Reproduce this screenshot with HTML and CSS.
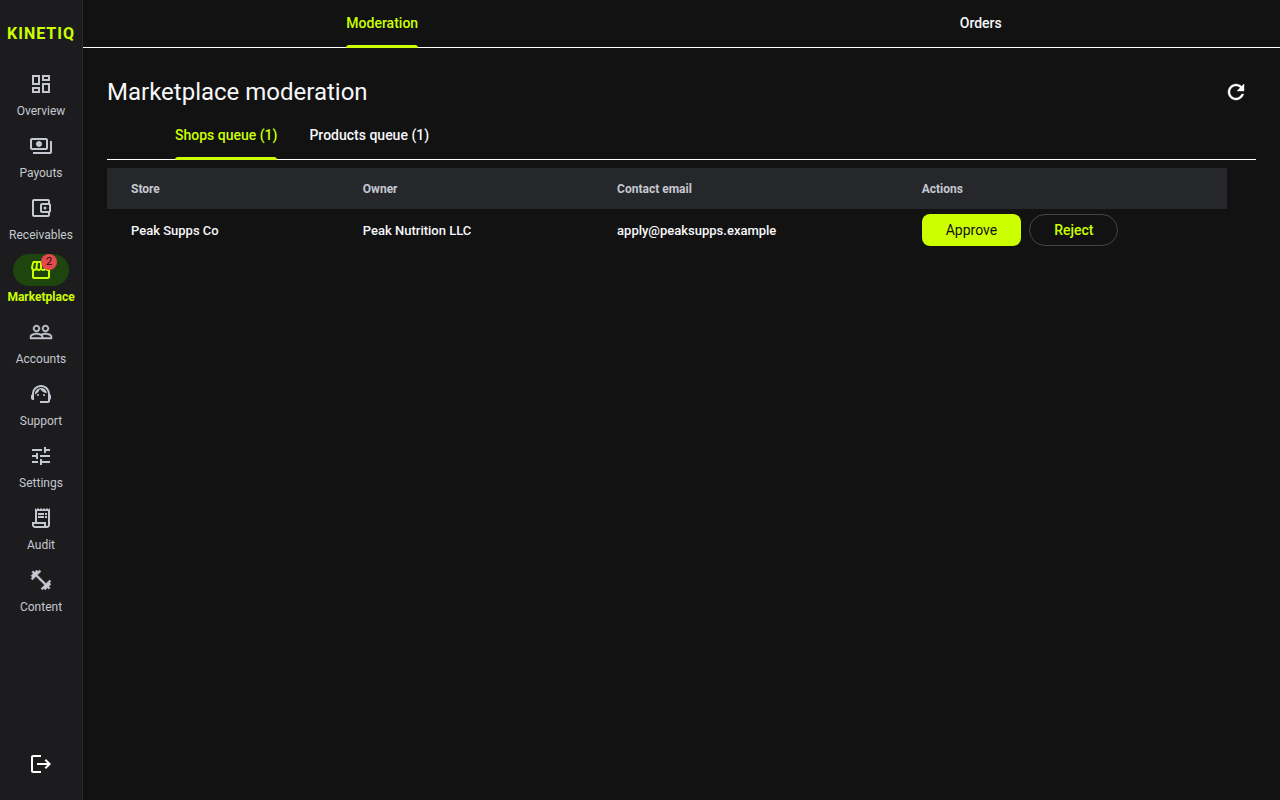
FILE: index.html
```
<!DOCTYPE html>
<html lang="en">
<head>
    <meta charset="UTF-8">
    <meta name="viewport" content="width=device-width, initial-scale=1.0">
    <title>Marketplace moderation - Kinetiq</title>
    <link rel="stylesheet" href="styles.css">
</head>
<body>
    <aside class="sidebar">
        <div class="logo">KINETIQ</div>
        <nav class="side-nav">
            <a href="#overview" class="nav-item">
                <span class="nav-icon"><svg viewBox="0 0 24 24"><path d="M19 5v2h-4V5h4M9 5v6H5V5h4m10 8v6h-4v-6h4M9 17v2H5v-2h4M21 3h-8v6h8V3zM11 3H3v10h8V3zm10 8h-8v10h8V11zm-10 4H3v6h8v-6z"/></svg></span>
                <span class="nav-label">Overview</span>
            </a>
            <a href="#payouts" class="nav-item">
                <span class="nav-icon"><svg viewBox="0 0 24 24"><path d="M19 14V6c0-1.1-.9-2-2-2H3c-1.1 0-2 .9-2 2v8c0 1.1.9 2 2 2h14c1.1 0 2-.9 2-2zm-2 0H3V6h14v8zm-7-7c-1.66 0-3 1.34-3 3s1.34 3 3 3 3-1.34 3-3-1.34-3-3-3zm13 0v11c0 1.1-.9 2-2 2H4v-2h17V7h2z"/></svg></span>
                <span class="nav-label">Payouts</span>
            </a>
            <a href="#receivables" class="nav-item">
                <span class="nav-icon"><svg viewBox="0 0 24 24"><path d="M21 7.28V5c0-1.1-.9-2-2-2H5c-1.11 0-2 .9-2 2v14c0 1.1.89 2 2 2h14c1.1 0 2-.9 2-2v-2.28c.59-.35 1-.98 1-1.72V9c0-.74-.41-1.37-1-1.72zM20 9v6h-7V9h7zM5 19V5h14v2h-6c-1.1 0-2 .9-2 2v6c0 1.1.9 2 2 2h6v2H5z"/><circle cx="16" cy="12" r="1.5"/></svg></span>
                <span class="nav-label">Receivables</span>
            </a>
            <a href="#marketplace" class="nav-item active">
                <span class="nav-icon"><svg viewBox="0 0 24 24"><path d="M21.9 8.89l-1.05-4.37c-.22-.9-1-1.52-1.91-1.52H5.05c-.9 0-1.69.63-1.9 1.52L2.1 8.89c-.24 1.02-.02 2.06.62 2.88.08.11.19.19.28.29V19c0 1.1.9 2 2 2h14c1.1 0 2-.9 2-2v-6.94c.09-.09.2-.18.28-.28.64-.82.87-1.87.62-2.89zm-2.99-3.9l1.05 4.37c.1.42.01.84-.25 1.17-.14.18-.44.47-.94.47-.61 0-1.14-.49-1.21-1.14L16.98 5l1.93-.01zM13 5h1.96l.54 4.52c.05.39-.07.78-.33 1.07-.22.26-.54.41-.95.41-.67 0-1.22-.59-1.22-1.31V5zM8.49 9.52L9.04 5H11v4.69c0 .72-.55 1.31-1.29 1.31-.34 0-.65-.15-.89-.41-.25-.29-.37-.68-.33-1.07zm-4.45-.16L5.05 5h1.97l-.58 4.86c-.08.65-.6 1.14-1.21 1.14-.49 0-.8-.29-.93-.47-.27-.32-.36-.75-.26-1.17zM5 19v-6.03c.08.01.15.03.23.03.87 0 1.66-.36 2.24-.95.6.6 1.4.95 2.31.95.87 0 1.65-.36 2.23-.93.59.57 1.39.93 2.29.93.84 0 1.64-.35 2.24-.95.58.59 1.37.95 2.24.95.08 0 .15-.02.23-.03V19H5z"/></svg><span class="badge">2</span></span>
                <span class="nav-label">Marketplace</span>
            </a>
            <a href="#accounts" class="nav-item">
                <span class="nav-icon"><svg class="heavy" viewBox="0 0 24 24"><path d="M16.5 13c-1.2 0-3.07.34-4.5 1-1.43-.67-3.3-1-4.5-1C5.33 13 1 14.08 1 16.25V19h22v-2.75c0-2.17-4.33-3.25-6.5-3.25zm-4 4.5h-10v-1.25c0-.54 2.56-1.75 5-1.75s5 1.21 5 1.75v1.25zm9 0H14v-1.25c0-.46-.2-.86-.52-1.22.88-.3 1.96-.53 3.02-.53 2.44 0 5 1.21 5 1.75v1.25zM7.5 12c1.93 0 3.5-1.57 3.5-3.5S9.43 5 7.5 5 4 6.57 4 8.5 5.57 12 7.5 12zm0-5.5c1.1 0 2 .9 2 2s-.9 2-2 2-2-.9-2-2 .9-2 2-2zm9 5.5c1.93 0 3.5-1.57 3.5-3.5S18.43 5 16.5 5 13 6.57 13 8.5s1.57 3.5 3.5 3.5zm0-5.5c1.1 0 2 .9 2 2s-.9 2-2 2-2-.9-2-2 .9-2 2-2z"/></svg></span>
                <span class="nav-label">Accounts</span>
            </a>
            <a href="#support" class="nav-item">
                <span class="nav-icon"><svg viewBox="0 0 24 24"><path d="M21 12.22C21 6.73 16.74 3 12 3c-4.69 0-9 3.65-9 9.28-.6.34-1 .98-1 1.72v2c0 1.1.9 2 2 2h1v-6.1c0-3.87 3.13-7 7-7s7 3.13 7 7V19h-8v2h8c1.1 0 2-.9 2-2v-1.22c.59-.31 1-.92 1-1.64v-2.3c0-.7-.41-1.31-1-1.62z"/><circle cx="9" cy="13" r="1"/><circle cx="15" cy="13" r="1"/><path d="M18 11.03C17.52 8.18 15.04 6 12.05 6c-3.03 0-6.29 2.51-6.03 6.45 2.47-1.01 4.33-3.21 4.86-5.89 1.31 2.63 4 4.44 7.12 4.47z"/></svg></span>
                <span class="nav-label">Support</span>
            </a>
            <a href="#settings" class="nav-item">
                <span class="nav-icon"><svg viewBox="0 0 24 24"><path d="M3 17v2h6v-2H3zM3 5v2h10V5H3zm10 16v-2h8v-2h-8v-2h-2v6h2zM7 9v2H3v2h4v2h2V9H7zm14 4v-2H11v2h10zm-6-4h2V7h4V5h-4V3h-2v6z"/></svg></span>
                <span class="nav-label">Settings</span>
            </a>
            <a href="#audit" class="nav-item">
                <span class="nav-icon"><svg viewBox="0 0 24 24"><path d="M19.5 3.5L18 2l-1.5 1.5L15 2l-1.5 1.5L12 2l-1.5 1.5L9 2 7.5 3.5 6 2v14H3v3c0 1.66 1.34 3 3 3h12c1.66 0 3-1.34 3-3V2l-1.5 1.5zM15 20H6c-.55 0-1-.45-1-1v-1h10v2zm4-1c0 .55-.45 1-1 1s-1-.45-1-1v-3H8V5h11v14z"/><path d="M9 7h6v2H9zM16 7h2v2h-2zM9 10h6v2H9zM16 10h2v2h-2z"/></svg></span>
                <span class="nav-label">Audit</span>
            </a>
            <a href="#content" class="nav-item">
                <span class="nav-icon"><svg class="heavy" viewBox="0 0 24 24"><path d="M20.57 14.86L22 13.43 20.57 12 17 15.57 8.43 7 12 3.43 10.57 2 9.14 3.43 7.71 2 5.57 4.14 4.14 2.71 2.71 4.14l1.43 1.43L2 7.71l1.43 1.43L2 10.57 3.43 12 7 8.43 15.57 17 12 20.57 13.43 22l1.43-1.43L16.29 22l2.14-2.14 1.43 1.43 1.43-1.43-1.43-1.43L22 16.29z"/></svg></span>
                <span class="nav-label">Content</span>
            </a>
        </nav>
        <button class="icon-btn" aria-label="Log out">
            <svg viewBox="0 0 24 24"><path d="M17 7l-1.41 1.41L18.17 11H8v2h10.17l-2.58 2.58L17 17l5-5zM4 5h8V3H4c-1.1 0-2 .9-2 2v14c0 1.1.9 2 2 2h8v-2H4V5z"/></svg>
        </button>
    </aside>

    <main class="main">
        <div class="tabs top-tabs">
            <button class="tab active"><span>Moderation</span></button>
            <button class="tab"><span>Orders</span></button>
        </div>

        <section class="content">
            <div class="page-header">
                <h1>Marketplace moderation</h1>
                <button class="icon-btn" aria-label="Refresh">
                    <svg class="heavy" viewBox="0 0 24 24"><path d="M17.65 6.35C16.2 4.9 14.21 4 12 4c-4.42 0-7.99 3.58-7.99 8s3.57 8 7.99 8c3.73 0 6.84-2.55 7.73-6h-2.08c-.82 2.33-3.04 4-5.65 4-3.31 0-6-2.69-6-6s2.69-6 6-6c1.66 0 3.14.69 4.22 1.78L13 11h7V4l-2.35 2.35z"/></svg>
                </button>
            </div>

            <div class="tabs queue-tabs">
                <button class="tab active"><span>Shops queue (1)</span></button>
                <button class="tab"><span>Products queue (1)</span></button>
            </div>

            <div class="table-wrap">
                <table>
                    <colgroup>
                        <col class="col-store">
                        <col class="col-owner">
                        <col class="col-email">
                        <col>
                    </colgroup>
                    <thead>
                        <tr>
                            <th>Store</th>
                            <th>Owner</th>
                            <th>Contact email</th>
                            <th>Actions</th>
                        </tr>
                    </thead>
                    <tbody>
                        <tr>
                            <td>Peak Supps Co</td>
                            <td>Peak Nutrition LLC</td>
                            <td>apply@peaksupps.example</td>
                            <td>
                                <div class="actions">
                                    <button class="btn btn-approve">Approve</button>
                                    <button class="btn btn-reject">Reject</button>
                                </div>
                            </td>
                        </tr>
                    </tbody>
                </table>
            </div>
        </section>
    </main>
</body>
</html>
```
FILE: styles.css
```
* {
    margin: 0;
    padding: 0;
    box-sizing: border-box;
}
body {
    display: flex;
    min-height: 100vh;
    background: #121212;
    color: #f7f7fa;
    font-family: Roboto, Arial, sans-serif;
    font-size: 14px;
}
button {
    font: inherit;
    color: inherit;
    background: none;
    border: none;
    cursor: pointer;
}
svg {
    display: block;
    width: 24px;
    height: 24px;
    fill: currentColor;
}
svg.heavy {
    stroke: currentColor;
    stroke-width: 0.4;
}

/* sidebar */
.sidebar {
    display: flex;
    flex-direction: column;
    align-items: center;
    flex: 0 0 83px;
    padding: 24px 0 16px;
    background: #1c1c1e;
    border-right: 1px solid #2a2a2d;
}
.logo {
    color: #ccff00;
    font-size: 16px;
    font-weight: 700;
    line-height: 20px;
    letter-spacing: 1px;
}
.side-nav {
    display: flex;
    flex-direction: column;
    gap: 11px;
    flex: 1;
    margin-top: 24px;
}
.nav-item {
    display: flex;
    flex-direction: column;
    align-items: center;
    gap: 3px;
    color: #c5c8d0;
    text-decoration: none;
}
.nav-icon {
    position: relative;
    display: flex;
    align-items: center;
    justify-content: center;
    width: 56px;
    height: 32px;
    border-radius: 16px;
}
.nav-label {
    font-size: 12px;
    line-height: 16px;
}
.nav-item.active {
    color: #ccff00;
}
.nav-item.active .nav-icon {
    background: #1f450e;
}
.nav-item.active .nav-label {
    font-weight: 700;
}
.badge {
    position: absolute;
    top: 0;
    right: 12px;
    width: 16px;
    height: 16px;
    border-radius: 8px;
    background: #e5484d;
    color: #121212;
    font-size: 11px;
    line-height: 16px;
    text-align: center;
}
.icon-btn {
    display: flex;
    align-items: center;
    justify-content: center;
    width: 40px;
    height: 40px;
    color: #fff;
}

/* main */
.main {
    flex: 1;
    min-width: 0;
}
.tabs {
    display: flex;
    height: 48px;
    border-bottom: 1px solid #fff;
}
.tab {
    display: flex;
    justify-content: center;
    height: 48px;
    padding: 0 16px;
    font-weight: 500;
}
.tab span {
    position: relative;
    height: 48px;
    line-height: 46px;
}
.tab.active {
    color: #ccff00;
}
.tab.active span::after {
    content: "";
    position: absolute;
    left: 0;
    right: 0;
    bottom: 0;
    height: 3px;
    background: #ccff00;
    border-radius: 3px 3px 0 0;
}
.top-tabs .tab {
    flex: 1;
}
.queue-tabs {
    padding-left: 52px;
}
.content {
    padding: 24px;
}
.page-header {
    display: flex;
    align-items: center;
    justify-content: space-between;
}
h1 {
    font-size: 24px;
    font-weight: 400;
    line-height: 32px;
}

/* table */
.table-wrap {
    padding: 8px 29px 0 0;
}
table {
    width: 100%;
    table-layout: fixed;
    border-collapse: collapse;
}
.col-store {
    width: 20.7%;
}
.col-owner {
    width: 22.7%;
}
.col-email {
    width: 27.2%;
}
th {
    height: 41px;
    padding-left: 24px;
    background: #26272b;
    color: #c5c8d0;
    font-size: 12px;
    font-weight: 700;
    text-align: left;
}
td {
    height: 42px;
    padding-left: 24px;
    font-size: 13px;
    font-weight: 500;
}
.actions {
    display: flex;
    gap: 8px;
}
.btn {
    height: 32px;
    padding: 0 24px;
    font-size: 14px;
}
.btn-approve {
    background: #ccff00;
    color: #121212;
    font-weight: 400;
    border-radius: 8px;
}
.btn-reject {
    color: #ccff00;
    font-weight: 500;
    border: 1px solid #444448;
    border-radius: 16px;
}
```
